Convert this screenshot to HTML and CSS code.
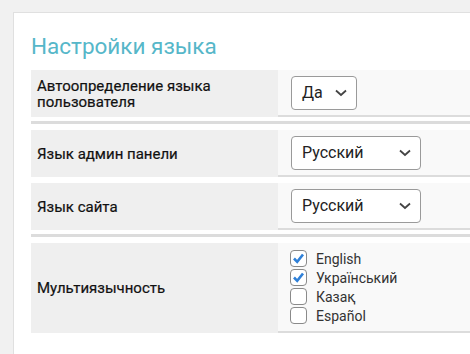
FILE: index.html
```html
<!DOCTYPE html>
<html lang="ru">

<head>
  <meta charset="UTF-8">
  <meta name="viewport" content="width=device-width, initial-scale=1.0">
  <title>Настройки языка</title>
  <link rel="stylesheet" href="styles.css">
</head>

<body>
  <div class="card">
    <h2 class="title">Настройки языка</h2>

    <div class="group">
      <div class="row">
        <div class="label">Автоопределение языка пользователя</div>
        <div class="value">
          <div class="select select-short">
            <span>Да</span>
            <svg width="12" height="8" viewBox="0 0 12 8"><path d="M1 1.5 L6 6 L11 1.5" fill="none" stroke="#444" stroke-width="1.8"/></svg>
          </div>
        </div>
      </div>
    </div>

    <div class="divider"></div>

    <div class="group">
      <div class="row">
        <div class="label">Язык админ панели</div>
        <div class="value">
          <div class="select">
            <span>Русский</span>
            <svg width="12" height="8" viewBox="0 0 12 8"><path d="M1 1.5 L6 6 L11 1.5" fill="none" stroke="#444" stroke-width="1.8"/></svg>
          </div>
        </div>
      </div>
      <div class="row">
        <div class="label">Язык сайта</div>
        <div class="value">
          <div class="select">
            <span>Русский</span>
            <svg width="12" height="8" viewBox="0 0 12 8"><path d="M1 1.5 L6 6 L11 1.5" fill="none" stroke="#444" stroke-width="1.8"/></svg>
          </div>
        </div>
      </div>
    </div>

    <div class="divider"></div>

    <div class="group">
      <div class="row row-tall">
        <div class="label">Мультиязычность</div>
        <div class="value">
          <ul class="checks">
            <li>
              <span class="box checked"><svg width="15" height="15" viewBox="0 0 15 15"><path d="M3 7.5 L6.2 10.8 L12 3.5" fill="none" stroke="#2f80d8" stroke-width="2.6"/></svg></span>
              English
            </li>
            <li>
              <span class="box checked"><svg width="15" height="15" viewBox="0 0 15 15"><path d="M3 7.5 L6.2 10.8 L12 3.5" fill="none" stroke="#2f80d8" stroke-width="2.6"/></svg></span>
              Український
            </li>
            <li><span class="box"></span>Казақ</li>
            <li><span class="box"></span>Español</li>
          </ul>
        </div>
      </div>
    </div>
  </div>
</body>

</html>
```

FILE: styles.css
```css
body {
  margin: 0;
  padding: 12px 0 0 13px;
  background-color: #f1f1f1;
  font-family: Roboto, "Liberation Sans", sans-serif;
  color: #222;
  overflow: hidden;
}

/* белая карточка, уходит за правый и нижний край */
.card {
  background-color: #fff;
  border: 1px solid #e0e0e0;
  border-right: none;
  min-height: 360px;
  padding: 0 0 0 17px;
}

.title {
  margin: 19px 0 10px;
  font-size: 22.5px;
  line-height: 28px;
  font-weight: 400;
  color: #56b7c9;
}

.group {
  display: flex;
  flex-direction: column;
  gap: 6px;
}

.divider {
  height: 3px;
  background-color: #dcdcdc;
  margin: 4px 0 6px;
}

.row {
  display: flex;
  min-height: 47px;
}

.row-tall {
  min-height: 90px;
}

.label {
  box-sizing: border-box;
  width: 247px;
  padding: 0 6px;
  display: flex;
  align-items: center;
  background-color: #efefef;
  font-size: 15px;
  line-height: 16px;
  font-weight: 400;
  color: #111;
  -webkit-text-stroke: 0.2px #111;
}

.value {
  flex: 1;
  display: flex;
  align-items: center;
  padding-left: 13px;
  background-color: #f9f9f9;
  border-bottom: 2px solid #dcdcdc;
}

/* выпадающий список */
.select {
  box-sizing: border-box;
  width: 130px;
  height: 34px;
  padding: 0 9px 0 10px;
  display: flex;
  align-items: center;
  justify-content: space-between;
  border: 1px solid #9a9a9a;
  border-radius: 4px;
  background-color: #fff;
  font-size: 16px;
  color: #222;
}

.select-short {
  width: 66px;
}

.checks {
  list-style: none;
  margin: 0;
  padding: 0;
  font-size: 14px;
  color: #333;
}

.checks li {
  height: 19px;
  display: flex;
  align-items: center;
  gap: 9px;
}

.box {
  box-sizing: border-box;
  width: 17px;
  height: 17px;
  margin-left: -1px;
  border: 1px solid #8a8a8a;
  border-radius: 4px;
  background-color: #fff;
  display: flex;
  align-items: center;
  justify-content: center;
}
```
